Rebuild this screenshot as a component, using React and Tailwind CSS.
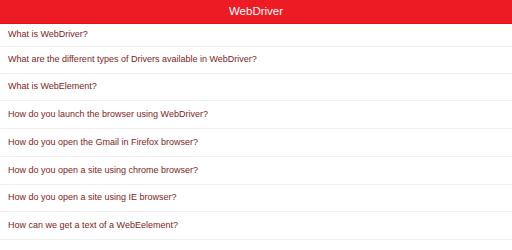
const questions = [
  { text: "What is WebDriver?", h: "h-[23px]" },
  { text: "What are the different types of Drivers available in WebDriver?", h: "h-[27px]" },
  { text: "What is WebElement?", h: "h-[27px]" },
  { text: "How do you launch the browser using WebDriver?", h: "h-[28px]" },
  { text: "How do you open the Gmail in Firefox browser?", h: "h-[28px]" },
  { text: "How do you open a site using chrome browser?", h: "h-[28px]" },
  { text: "How do you open a site using IE browser?", h: "h-[27px]" },
  { text: "How can we get a text of a WebEelement?", h: "h-[28px]" },
];

export default function App() {
  return (
    <div className="w-[512px] h-[250px] overflow-hidden bg-white font-['Liberation_Sans',Arial,sans-serif]">
      {/* Header */}
      <div className="h-[24px] bg-[#ed1c24] border-b border-[#e3121a] flex items-center justify-center">
        <span className="text-white text-[11.5px] leading-none">WebDriver</span>
      </div>

      {/* Question list */}
      <ul>
        {questions.map((q, i) => (
          <li
            key={i}
            className={`${q.h} flex items-center px-[8px] border-b border-[#f0f0f0] text-[9px] text-[#7d2323]`}
          >
            {q.text}
          </li>
        ))}
      </ul>
    </div>
  );
}
